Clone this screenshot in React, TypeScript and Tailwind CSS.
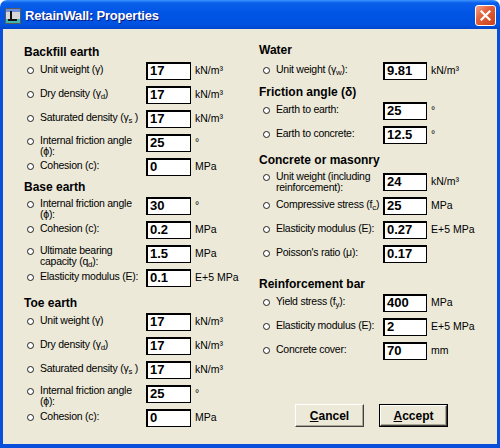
import React from 'react'

const Radio = () => (
  <span className="mt-[3px] h-[7px] w-[7px] shrink-0 rounded-full border border-[#1e1e1e] bg-white" />
)

type FieldProps = {
  label: React.ReactNode
  value: string
  unit?: string
  labelW: string
  boxW: string
  pad?: string
  mt?: string
}

const Field = ({ label, value, unit, labelW, boxW, pad = 'pt-[5px]', mt = '' }: FieldProps) => (
  <div className={`flex h-6 items-start ${mt}`}>
    <div className={`flex shrink-0 items-start gap-[6px] ${labelW} ${pad}`}>
      <Radio />
      <span className="whitespace-nowrap text-[10.5px] leading-[11px] tracking-[-0.25px]">{label}</span>
    </div>
    <div
      className={`mt-[3px] h-[18px] shrink-0 border-b border-l-2 border-r border-t-2 border-black bg-white pl-[2px] text-[13px] font-bold leading-[14px] ${boxW}`}
    >
      {value}
    </div>
    <span className="ml-[4px] mt-[5px] whitespace-nowrap text-[10.5px] leading-[12px]">{unit}</span>
  </div>
)

const Heading = ({ children, mt = '' }: { children: React.ReactNode; mt?: string }) => (
  <div className={`h-[14px] text-[12px] font-bold leading-[14px] ${mt}`}>{children}</div>
)

const L = { labelW: 'w-[119px]', boxW: 'w-[45px]' }
const R = { labelW: 'w-[120px]', boxW: 'w-[44px]' }

const WallIcon = () => (
  <svg width="16" height="16" viewBox="0 0 16 16">
    <rect x="0.5" y="0.5" width="15" height="15" fill="#d8d8d8" stroke="#5a5a5a" />
    <rect x="1" y="1" width="14" height="3" fill="#6f8fd8" />
    <rect x="1" y="11" width="14" height="4" fill="#3fb8b0" />
    <path d="M5 3 V11 H3 V13 H12 V11 H7 V3 Z" fill="#111" />
  </svg>
)

const CloseBox = () => (
  <div className="flex h-[21px] w-[21px] items-center justify-center rounded-[3px] border border-white bg-[linear-gradient(135deg,#f4a389_0%,#e2623c_40%,#c8401a_100%)]">
    <svg width="11" height="11" viewBox="0 0 11 11">
      <path d="M1.5 1.5 L9.5 9.5 M9.5 1.5 L1.5 9.5" stroke="#fff" strokeWidth="2.2" strokeLinecap="square" />
    </svg>
  </div>
)

const XpButton = ({ children, isDefault }: { children: React.ReactNode; isDefault?: boolean }) => {
  const face = (
    <div className="flex h-full w-full items-center justify-center border border-b-[#404040] border-l-white border-r-[#404040] border-t-white bg-[#ece9d8] text-[12px] font-bold shadow-[inset_-1px_-1px_0_#aca899]">
      {children}
    </div>
  )
  return isDefault ? (
    <div className="h-[23px] w-[69px] border border-black">{face}</div>
  ) : (
    <div className="h-[23px] w-[69px]">{face}</div>
  )
}

export default function App() {
  return (
    <div className="flex h-[448px] w-[500px] flex-col overflow-hidden bg-white font-['Liberation_Sans',Arial,sans-serif] text-[11px] text-black">
      {/* title bar */}
      <div className="flex h-[29px] shrink-0 items-center rounded-t-[7px] bg-[linear-gradient(180deg,#3d95ff_0%,#0a5fea_10%,#0055e5_45%,#0052e0_85%,#0045cc_100%)] pl-[5px] pr-[4px] pt-[2px]">
        <WallIcon />
        <span className="ml-[4px] text-[13px] font-bold tracking-[-0.2px] text-white [text-shadow:1px_1px_0_#0a1883]">
          RetainWall: Properties
        </span>
        <div className="ml-auto">
          <CloseBox />
        </div>
      </div>

      {/* frame + client area */}
      <div className="flex flex-1 bg-[#0850dc] px-[3px] pb-[4px]">
        <div className="flex flex-1 bg-[#ece9d8]">
          {/* left column */}
          <div className="flex w-[256px] shrink-0 flex-col pl-[21px] pt-[16px]">
            <Heading>Backfill earth</Heading>
            <div className="flex flex-col pl-[3px]">
              <Field {...L} label={<>Unit weight (γ)</>} value="17" unit="kN/m³" />
              <Field {...L} label={<>Dry density (γ<sub>d</sub>)</>} value="17" unit="kN/m³" />
              <Field {...L} label={<>Saturated density (γ<sub>s</sub> )</>} value="17" unit="kN/m³" />
              <Field {...L} pad="pt-[4px]" label={<>Internal friction angle<br />(ϕ):</>} value="25" unit="°" />
              <Field {...L} label="Cohesion (c):" value="0" unit="MPa" />
            </div>

            <Heading mt="mt-[1px]">Base earth</Heading>
            <div className="flex flex-col pl-[3px]">
              <Field {...L} pad="pt-[4px]" label={<>Internal friction angle<br />(ϕ):</>} value="30" unit="°" />
              <Field {...L} label="Cohesion (c):" value="0.2" unit="MPa" />
              <Field {...L} pad="pt-[3px]" label={<>Ultimate bearing<br />capacity (q<sub>d</sub>):</>} value="1.5" unit="MPa" />
              <Field {...L} label="Elasticity modulus (E):" value="0.1" unit="E+5 MPa" />
            </div>

            <Heading mt="mt-[6px]">Toe earth</Heading>
            <div className="flex flex-col pl-[3px]">
              <Field {...L} label={<>Unit weight (γ)</>} value="17" unit="kN/m³" />
              <Field {...L} label={<>Dry density (γ<sub>d</sub>)</>} value="17" unit="kN/m³" />
              <Field {...L} label={<>Saturated density (γ<sub>s</sub> )</>} value="17" unit="kN/m³" />
              <Field {...L} pad="pt-[3px]" label={<>Internal friction angle<br />(ϕ):</>} value="25" unit="°" />
              <Field {...L} label="Cohesion (c):" value="0" unit="MPa" />
            </div>
          </div>

          {/* right column */}
          <div className="flex flex-1 flex-col pt-[14px]">
            <Heading>Water</Heading>
            <div className="mt-[2px] flex flex-col pl-[4px]">
              <Field {...R} label={<>Unit weight (γ<sub>w</sub>):</>} value="9.81" unit="kN/m³" />
            </div>

            <Heading mt="mt-[2px]">Friction angle (δ)</Heading>
            <div className="flex flex-col pl-[4px]">
              <Field {...R} label="Earth to earth:" value="25" unit="°" />
              <Field {...R} label="Earth to concrete:" value="12.5" unit="°" />
            </div>

            <Heading mt="mt-[6px]">Concrete or masonry</Heading>
            <div className="mt-[3px] flex flex-col pl-[4px]">
              <Field {...R} pad="pt-[1px]" label={<>Unit weight (including<br />reinforcement):</>} value="24" unit="kN/m³" />
              <Field {...R} label={<>Compressive stress (f<sub>c</sub>)</>} value="25" unit="MPa" />
              <Field {...R} label="Elasticity modulus (E):" value="0.27" unit="E+5 MPa" />
              <Field {...R} label="Poisson's ratio (μ):" value="0.17" />
            </div>

            <Heading mt="mt-[11px]">Reinforcement bar</Heading>
            <div className="flex flex-col pl-[4px]">
              <Field {...R} label={<>Yield stress (f<sub>y</sub>):</>} value="400" unit="MPa" />
              <Field {...R} label="Elasticity modulus (E):" value="2" unit="E+5 MPa" />
              <Field {...R} label="Concrete cover:" value="70" unit="mm" />
            </div>

            <div className="ml-[36px] mt-[41px] flex gap-[15px]">
              <XpButton>
                <span><u>C</u>ancel</span>
              </XpButton>
              <XpButton isDefault>
                <span><u>A</u>ccept</span>
              </XpButton>
            </div>
          </div>
        </div>
      </div>
    </div>
  )
}
